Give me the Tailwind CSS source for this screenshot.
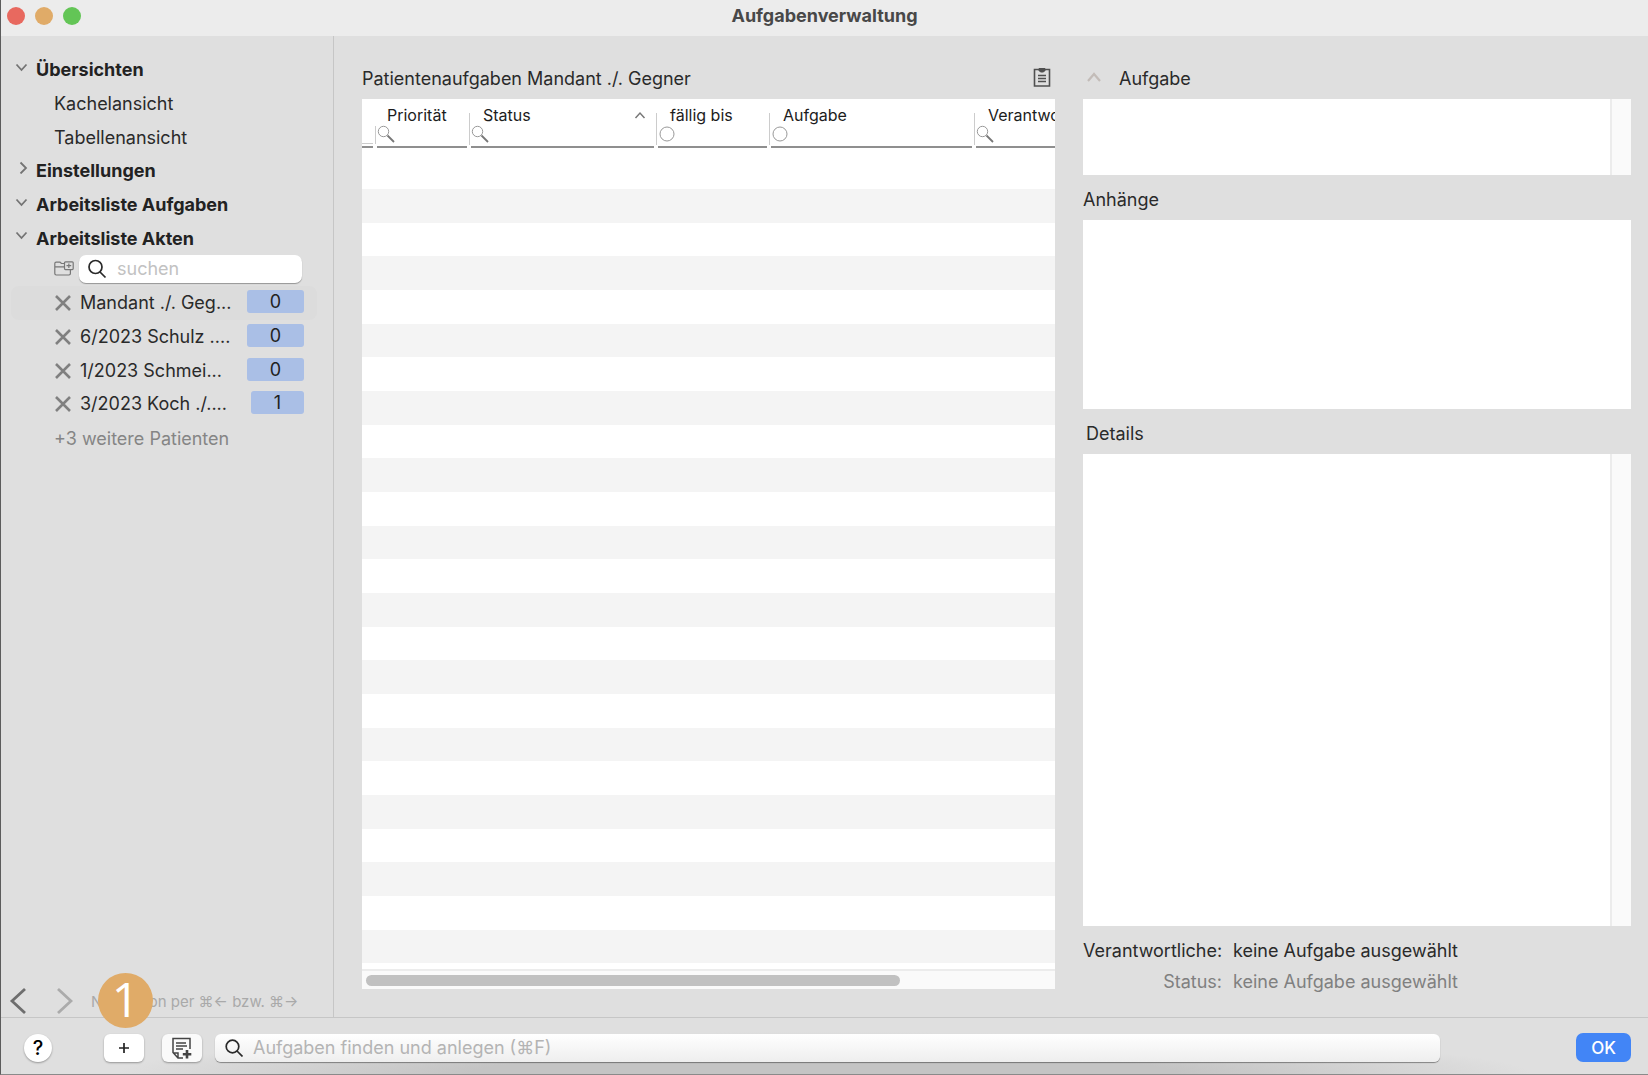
<!DOCTYPE html>
<html lang="de">
<head>
<meta charset="utf-8">
<meta name="viewport" content="width=device-width, initial-scale=1">
<title>Aufgabenverwaltung</title>
<script src="https://cdn.jsdelivr.net/npm/@tailwindcss/browser@4"></script>
</head>
<body class="font-[Inter,sans-serif] text-lg leading-6 text-[#2a2a2a]">
<div class="flex h-screen flex-col overflow-hidden border-b border-l border-b-[#8a8a8a] border-l-[#5c5c5c] bg-[#dfdfdf]">

  <header class="relative flex h-9 shrink-0 items-center justify-center bg-[#ececec] pb-1">
    <div class="absolute left-1.5 top-[7px] flex gap-2.5">
      <button aria-label="Schließen" class="size-[18px] rounded-full bg-[#e8695f]"></button>
      <button aria-label="Minimieren" class="size-[18px] rounded-full bg-[#e0ab68]"></button>
      <button aria-label="Maximieren" class="size-[18px] rounded-full bg-[#63c556]"></button>
    </div>
    <h1 class="font-bold text-[#484848]">Aufgabenverwaltung</h1>
  </header>

  <div class="flex min-h-0 flex-1">
    <nav class="flex w-[333px] shrink-0 flex-col border-r border-[#c6c6c6] pt-[17px]">
      <ul class="[&>li]:flex [&>li]:h-[34px] [&>li]:items-center [&>li:nth-child(3n)]:h-[33px]">
        <li class="gap-2 pl-3.5 font-bold text-[#222]"><svg class="mb-1.5 size-[13px]" viewBox="0 0 13 13" fill="none" stroke="#747474" stroke-width="1.8"><path d="M1.5 3.5 6.5 9l5-5.5"/></svg><a href="#">Übersichten</a></li>
        <li class="pl-[53px]"><a href="#">Kachelansicht</a></li>
        <li class="pl-[53px]"><a href="#">Tabellenansicht</a></li>
        <li class="gap-2 pl-3.5 font-bold text-[#222]"><svg class="mb-2 size-[13px]" viewBox="0 0 13 13" fill="none" stroke="#747474" stroke-width="1.8"><path d="M5.5 1.5 11 7l-5.5 5.5"/></svg><a href="#">Einstellungen</a></li>
        <li class="gap-2 pl-3.5 font-bold text-[#222]"><svg class="mb-1.5 size-[13px]" viewBox="0 0 13 13" fill="none" stroke="#747474" stroke-width="1.8"><path d="M1.5 3.5 6.5 9l5-5.5"/></svg><a href="#">Arbeitsliste Aufgaben</a></li>
        <li class="gap-2 pl-3.5 font-bold text-[#222]"><svg class="mb-1.5 size-[13px]" viewBox="0 0 13 13" fill="none" stroke="#747474" stroke-width="1.8"><path d="M1.5 3.5 6.5 9l5-5.5"/></svg><a href="#">Arbeitsliste Akten</a></li>
      </ul>

      <div class="flex h-[31px] items-start gap-[5px] pl-[53px]">
        <button aria-label="Akte hinzufügen" class="mt-1.5"><svg class="h-4 w-5" viewBox="0 0 20 16" fill="none" stroke="#777" stroke-width="1.2"><path d="M10 2.5H7.500L6 1.200H2.200A1.400 1.400 0 0 0 .8 2.600v10A1.400 1.400 0 0 0 2.200 14H15a1.400 1.400 0 0 0 1.400-1.400V9M.8 5.800H10"/><rect x="10.5" y=".8" width="8.7" height="7.8" rx="1"/><path d="M14.850 2.400v4.600M12.500 4.700h4.700"/></svg></button>
        <label class="flex h-7 w-[223px] items-center gap-2.5 rounded-[7px] bg-white px-2 shadow-[0_1px_1px_#0005]">
          <svg class="size-5 shrink-0" viewBox="0 0 20 20" fill="none" stroke="#2a2a2a" stroke-width="1.7"><circle cx="8.5" cy="8" r="6.5"/><path d="m13 13 5.500 5.500"/></svg>
          <input type="text" aria-label="Akten suchen" placeholder="suchen" class="w-full min-w-0 outline-none placeholder:text-[#c2c2c2]">
        </label>
      </div>

      <ul class="[&>li]:flex [&>li]:h-[34px] [&>li]:items-center [&>li:nth-child(3n)]:h-[33px]">
        <li class="ml-2.5 mr-4 gap-2 rounded-lg bg-[#dcdcdc] pl-[43px] pr-[13px]">
          <button aria-label="Entfernen"><svg class="size-[18px]" viewBox="0 0 18 18" stroke="#808080" stroke-width="2.6"><path d="m2 2 14 14M16 2 2 16"/></svg></button>
          <a href="#" class="flex-1 whitespace-nowrap">Mandant ./. Geg...</a><span class="mb-[3px] w-[57px] rounded-[3px] bg-[#aabfe6] text-center leading-[23px] text-[#222]">0</span></li>
        <li class="ml-2.5 mr-4 gap-2 pl-[43px] pr-[13px]">
          <button aria-label="Entfernen"><svg class="size-[18px]" viewBox="0 0 18 18" stroke="#808080" stroke-width="2.6"><path d="m2 2 14 14M16 2 2 16"/></svg></button>
          <a href="#" class="flex-1 whitespace-nowrap">6/2023 Schulz ....</a><span class="mb-[3px] w-[57px] rounded-[3px] bg-[#aabfe6] text-center leading-[23px] text-[#222]">0</span></li>
        <li class="ml-2.5 mr-4 gap-2 pl-[43px] pr-[13px]">
          <button aria-label="Entfernen"><svg class="size-[18px]" viewBox="0 0 18 18" stroke="#808080" stroke-width="2.6"><path d="m2 2 14 14M16 2 2 16"/></svg></button>
          <a href="#" class="flex-1 whitespace-nowrap">1/2023 Schmei...</a><span class="mb-[3px] w-[57px] rounded-[3px] bg-[#aabfe6] text-center leading-[23px] text-[#222]">0</span></li>
        <li class="ml-2.5 mr-4 gap-2 pl-[43px] pr-[13px]">
          <button aria-label="Entfernen"><svg class="size-[18px]" viewBox="0 0 18 18" stroke="#808080" stroke-width="2.6"><path d="m2 2 14 14M16 2 2 16"/></svg></button>
          <a href="#" class="flex-1 whitespace-nowrap">3/2023 Koch ./....</a><span class="mb-[3px] w-[53px] rounded-[3px] bg-[#aabfe6] text-center leading-[23px] text-[#222]">1</span></li>
        <li class="pl-[53px] pt-0.5 text-[#858585]"><a href="#">+3 weitere Patienten</a></li>
      </ul>

      <div class="relative mt-auto flex h-8 items-center pl-2">
        <button aria-label="Zurück"><svg class="h-7 w-[18px]" viewBox="0 0 18 28" fill="none" stroke="#6e6e6e" stroke-width="2.8"><path d="M16 2 3 14l13 12"/></svg></button>
        <button aria-label="Vor" class="ml-7"><svg class="h-7 w-[18px]" viewBox="0 0 18 28" fill="none" stroke="#ababab" stroke-width="2.8"><path d="m3 2 13 12L3 26"/></svg></button>
        <p class="ml-[18px] whitespace-nowrap pt-0.5 text-[15px] text-[#a9a9a9]">Navigation per ⌘← bzw. ⌘→</p>
        <span class="absolute -bottom-[11px] left-[97px] z-10 flex size-[55px] items-center justify-center rounded-full bg-[#e0ab68] pb-1 font-['Open_Sans',sans-serif] text-[48px] leading-none text-white">1</span>
      </div>
    </nav>

    <main class="flex min-w-0 flex-1 gap-7 pb-7 pl-7 pr-[17px]">
      <section class="flex min-w-0 shrink grow basis-[693px] flex-col">
        <div class="flex h-[63px] items-center justify-between pt-[23px]">
          <h2>Patientenaufgaben Mandant ./. Gegner</h2>
          <button aria-label="Zwischenablage" class="mb-1 mr-1"><svg class="h-5 w-[18px]" viewBox="0 0 18 20" fill="none" stroke="#505050" stroke-width="1.6"><path d="M6 2.500H1.500v16.500h15V2.500H12"/><path d="M6 1.500h6v2L10.500 5h-3L6 3.500z" fill="#505050" stroke-width="1"/><path d="M5 8.500h8M5 11.500h8M5 14.500h8" stroke-width="1.3"/></svg></button>
        </div>
        <div class="min-h-0 flex-1 overflow-hidden bg-white">
          <table class="w-[886px] table-fixed border-collapse text-left text-base text-[#1c1c1c]">
            <colgroup><col class="w-[13px]"><col class="w-[94px]"><col class="w-[187px]"><col class="w-[113px]"><col class="w-[205px]"><col></colgroup>
            <thead>
              <tr class="h-14 align-top [&>th]:p-0 [&>th]:font-normal">
                <th><div class="mr-0.5 h-[49px] border-b-2 border-[#8f8f8f] pt-7"><div class="h-[17px] border-b border-[#ccc]"></div></div></th>
                <th><div class="mr-0.5 flex"><span class="mt-[27px] h-[18px] border-l border-[#ccc] pl-px"></span><div class="h-[49px] flex-1 border-b-2 border-[#8f8f8f] pt-1"><div class="pl-2.5">Priorität</div><svg class="-mt-0.5 size-[18px]" viewBox="0 0 18 18" fill="none" stroke="#777"><circle cx="6.5" cy="6.5" r="5.2" stroke="#999"/><path d="m10.500 10.500 6.500 6.500" stroke-width="1.8"/></svg></div></div></th>
                <th><div class="mr-0.5 flex"><span class="mt-3.5 h-8 border-l border-[#ccc] pl-px"></span><div class="h-[49px] flex-1 border-b-2 border-[#8f8f8f] pt-1"><div class="flex items-center justify-between pl-3 pr-2">Status<svg class="h-2 w-3" viewBox="0 0 12 8" fill="none" stroke="#777" stroke-width="1.5"><path d="m1.500 7 4.500-5 4.500 5"/></svg></div><svg class="-mt-0.5 size-[18px]" viewBox="0 0 18 18" fill="none" stroke="#777"><circle cx="6.5" cy="6.5" r="5.2" stroke="#999"/><path d="m10.500 10.500 6.500 6.500" stroke-width="1.8"/></svg></div></div></th>
                <th><div class="mr-0.5 flex"><span class="mt-3.5 h-8 border-l border-[#ccc] pl-px"></span><div class="h-[49px] flex-1 border-b-2 border-[#8f8f8f] pt-1"><div class="pl-3">fällig bis</div><svg class="-mt-0.5 size-[18px]" viewBox="0 0 18 18" fill="none" stroke="#999"><circle cx="9" cy="9" r="7"/></svg></div></div></th>
                <th><div class="mr-0.5 flex"><span class="mt-3.5 h-8 border-l border-[#ccc] pl-px"></span><div class="h-[49px] flex-1 border-b-2 border-[#8f8f8f] pt-1"><div class="pl-3">Aufgabe</div><svg class="-mt-0.5 size-[18px]" viewBox="0 0 18 18" fill="none" stroke="#999"><circle cx="9" cy="9" r="7"/></svg></div></div></th>
                <th><div class="flex"><span class="mt-3.5 h-8 border-l border-[#ccc] pl-px"></span><div class="h-[49px] flex-1 border-b-2 border-[#8f8f8f] pt-1"><div class="pl-3">Verantwortliche</div><svg class="-mt-0.5 size-[18px]" viewBox="0 0 18 18" fill="none" stroke="#777"><circle cx="6.5" cy="6.5" r="5.2" stroke="#999"/><path d="m10.500 10.500 6.500 6.500" stroke-width="1.8"/></svg></div></div></th>
              </tr>
            </thead>
            <tbody id="rows" class="[&>tr]:h-[34px] [&>tr:nth-child(3n)]:h-[33px] [&>tr:nth-child(even)]:bg-[#f4f4f4]"></tbody>
          </table>
        </div>
        <div class="h-5 shrink-0 border-t-2 border-[#ececec] bg-[#fafafa] px-1 pt-1"><div class="h-[11px] w-[78%] rounded-full bg-[#c1c1c1]"></div></div>
      </section>

      <section class="flex min-w-0 shrink grow basis-[548px] flex-col">
        <div class="flex h-[63px] shrink-0 items-center gap-[18px] pl-1 pt-[23px]">
          <button aria-label="Aufgabe einklappen" class="mb-1"><svg class="h-3 w-3.5" viewBox="0 0 14 12" fill="none" stroke="#c3bcb8" stroke-width="2.2"><path d="m1 10 6-7 6 7"/></svg></button>
          <label for="aufgabe">Aufgabe</label>
        </div>
        <div class="flex h-[76px] shrink-0 bg-white"><textarea id="aufgabe" class="min-w-0 flex-1 resize-none outline-none"></textarea><div class="w-[21px] border-l-2 border-[#ececec] bg-[#fafafa]"></div></div>
        <label for="anhaenge" class="flex h-[45px] shrink-0 items-center pt-1">Anhänge</label>
        <textarea id="anhaenge" class="h-[189px] shrink-0 resize-none bg-white outline-none"></textarea>
        <label for="details" class="flex h-[45px] shrink-0 items-center pl-[3px] pt-1">Details</label>
        <div class="flex min-h-0 flex-1 bg-white"><textarea id="details" class="min-w-0 flex-1 resize-none outline-none"></textarea><div class="w-[21px] border-l-2 border-[#ececec] bg-[#fafafa]"></div></div>
        <dl class="grid h-[63px] shrink-0 grid-cols-[139px_1fr] gap-x-[11px] whitespace-nowrap pt-[9px] leading-[31px]">
          <dt class="text-right">Verantwortliche:</dt><dd>keine Aufgabe ausgewählt</dd>
          <dt class="text-right text-[#808080]">Status:</dt><dd class="text-[#808080]">keine Aufgabe ausgewählt</dd>
        </dl>
      </section>
    </main>
  </div>

  <footer class="flex h-[57px] shrink-0 items-center border-t border-[#c6c6c6] bg-[radial-gradient(ellipse_43%_75%_at_50%_100%,#c4c4c4_50%,#dfdfdf_100%)] pl-[23px] pr-[17px] pt-[3px]">
    <button aria-label="Hilfe" class="flex size-7 items-center justify-center rounded-full bg-white text-xl font-medium text-black shadow-[0_1px_2px_#0005]">?</button>
    <button aria-label="Neue Aufgabe" class="ml-[52px] flex h-7 w-10 items-center justify-center rounded-md bg-white shadow-[0_1px_2px_#0005]"><svg class="size-3" viewBox="0 0 12 12" stroke="#222" stroke-width="1.7"><path d="M6 1v10M1 6h10"/></svg></button>
    <button aria-label="Neue Notiz" class="ml-[18px] flex h-7 w-10 items-center justify-center rounded-md bg-[#fafafa] shadow-[0_1px_2px_#0005]"><svg class="size-[22px]" viewBox="0 0 22 22" fill="none" stroke="#444" stroke-width="1.5"><path d="M19 12V1.500H2v14L7 21h5M2 16h5v5M5 6h10M5 9h11M5 12h7" /><path d="M16 13v8.500M11.800 17.200h8.500" stroke-width="2.6"/></svg></button>
    <label class="ml-[13px] flex h-7 min-w-0 flex-1 items-center gap-2.5 rounded-md bg-linear-to-b from-white to-[#eee] px-2.5 shadow-[0_1px_1px_#0006]">
      <svg class="size-[18px] shrink-0" viewBox="0 0 18 18" fill="none" stroke="#2a2a2a" stroke-width="1.7"><circle cx="7.5" cy="7.5" r="6.3"/><path d="m12 12 5.500 5.500"/></svg>
      <input type="text" aria-label="Aufgaben finden und anlegen" placeholder="Aufgaben finden und anlegen (⌘F)" class="w-full min-w-0 outline-none placeholder:text-[#b4b4b4]">
    </label>
    <button class="ml-[136px] h-[29px] w-[55px] rounded-[7px] bg-[#4285f6] text-[17px] font-medium text-white">OK</button>
  </footer>
</div>
<script>
  // Empty task rows fill the list
  const rows = document.getElementById('rows');
  for (let i = 0; i < 60; i++) rows.insertRow().insertCell().colSpan = 6;
</script>
</body>
</html>
